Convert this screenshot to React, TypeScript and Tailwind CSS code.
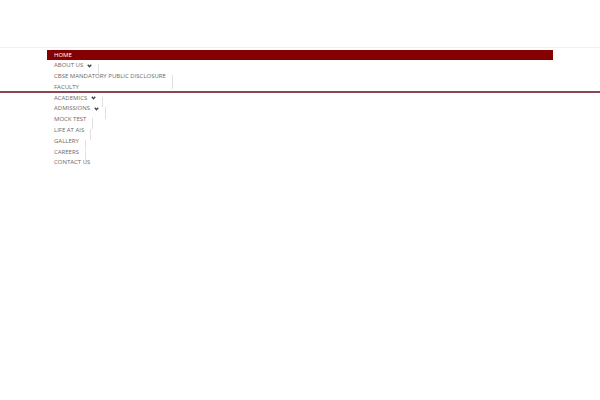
import React from "react";

const items: { label: string; caret?: boolean; sep?: number }[] = [
  { label: "HOME" },
  { label: "ABOUT US", caret: true, sep: 10 },
  { label: "CBSE MANDATORY PUBLIC DISCLOSURE", sep: 14 },
  { label: "FACULTY" },
  { label: "ACADEMICS", caret: true, sep: 10 },
  { label: "ADMISSIONS", caret: true, sep: 12 },
  { label: "MOCK TEST", sep: 11 },
  { label: "LIFE AT AIS", sep: 11 },
  { label: "GALLERY", sep: 10 },
  { label: "CAREERS", sep: 10 },
  { label: "CONTACT US" },
];

function Caret() {
  return (
    <svg width="5" height="4" viewBox="0 0 10 8" className="ml-[4px] inline-block">
      <path d="M1.5 1.5 L5 5.5 L8.5 1.5" fill="none" stroke="#444" strokeWidth="2.6" />
    </svg>
  );
}

export default function App() {
  return (
    <div className="min-h-[400px] bg-white" style={{ fontFamily: '"Open Sans", sans-serif' }}>
      <div className="h-[48px] border-b border-[#f1f1f1]" />
      <div className="h-[45px] border-b-2 border-[#8c4651]">
        <div className="mx-[47px] pt-[1.5px]">
          <ul className="text-[6px] leading-[10.8px] text-[#6a6a6a] antialiased">
            {items.map((it, i) => (
              <li key={it.label} className={i === 0 ? "bg-[#850000] text-white pl-[7px]" : "pl-[7px]"}>
                <span className="relative inline-flex items-center pr-[7px]">
                  {it.label}
                  {it.caret && <Caret />}
                  {it.sep && (
                    <span
                      className="absolute right-0 top-[4px] w-px bg-[#e0e0e0]"
                      style={{ height: it.sep }}
                    />
                  )}
                </span>
              </li>
            ))}
          </ul>
        </div>
      </div>
    </div>
  );
}
